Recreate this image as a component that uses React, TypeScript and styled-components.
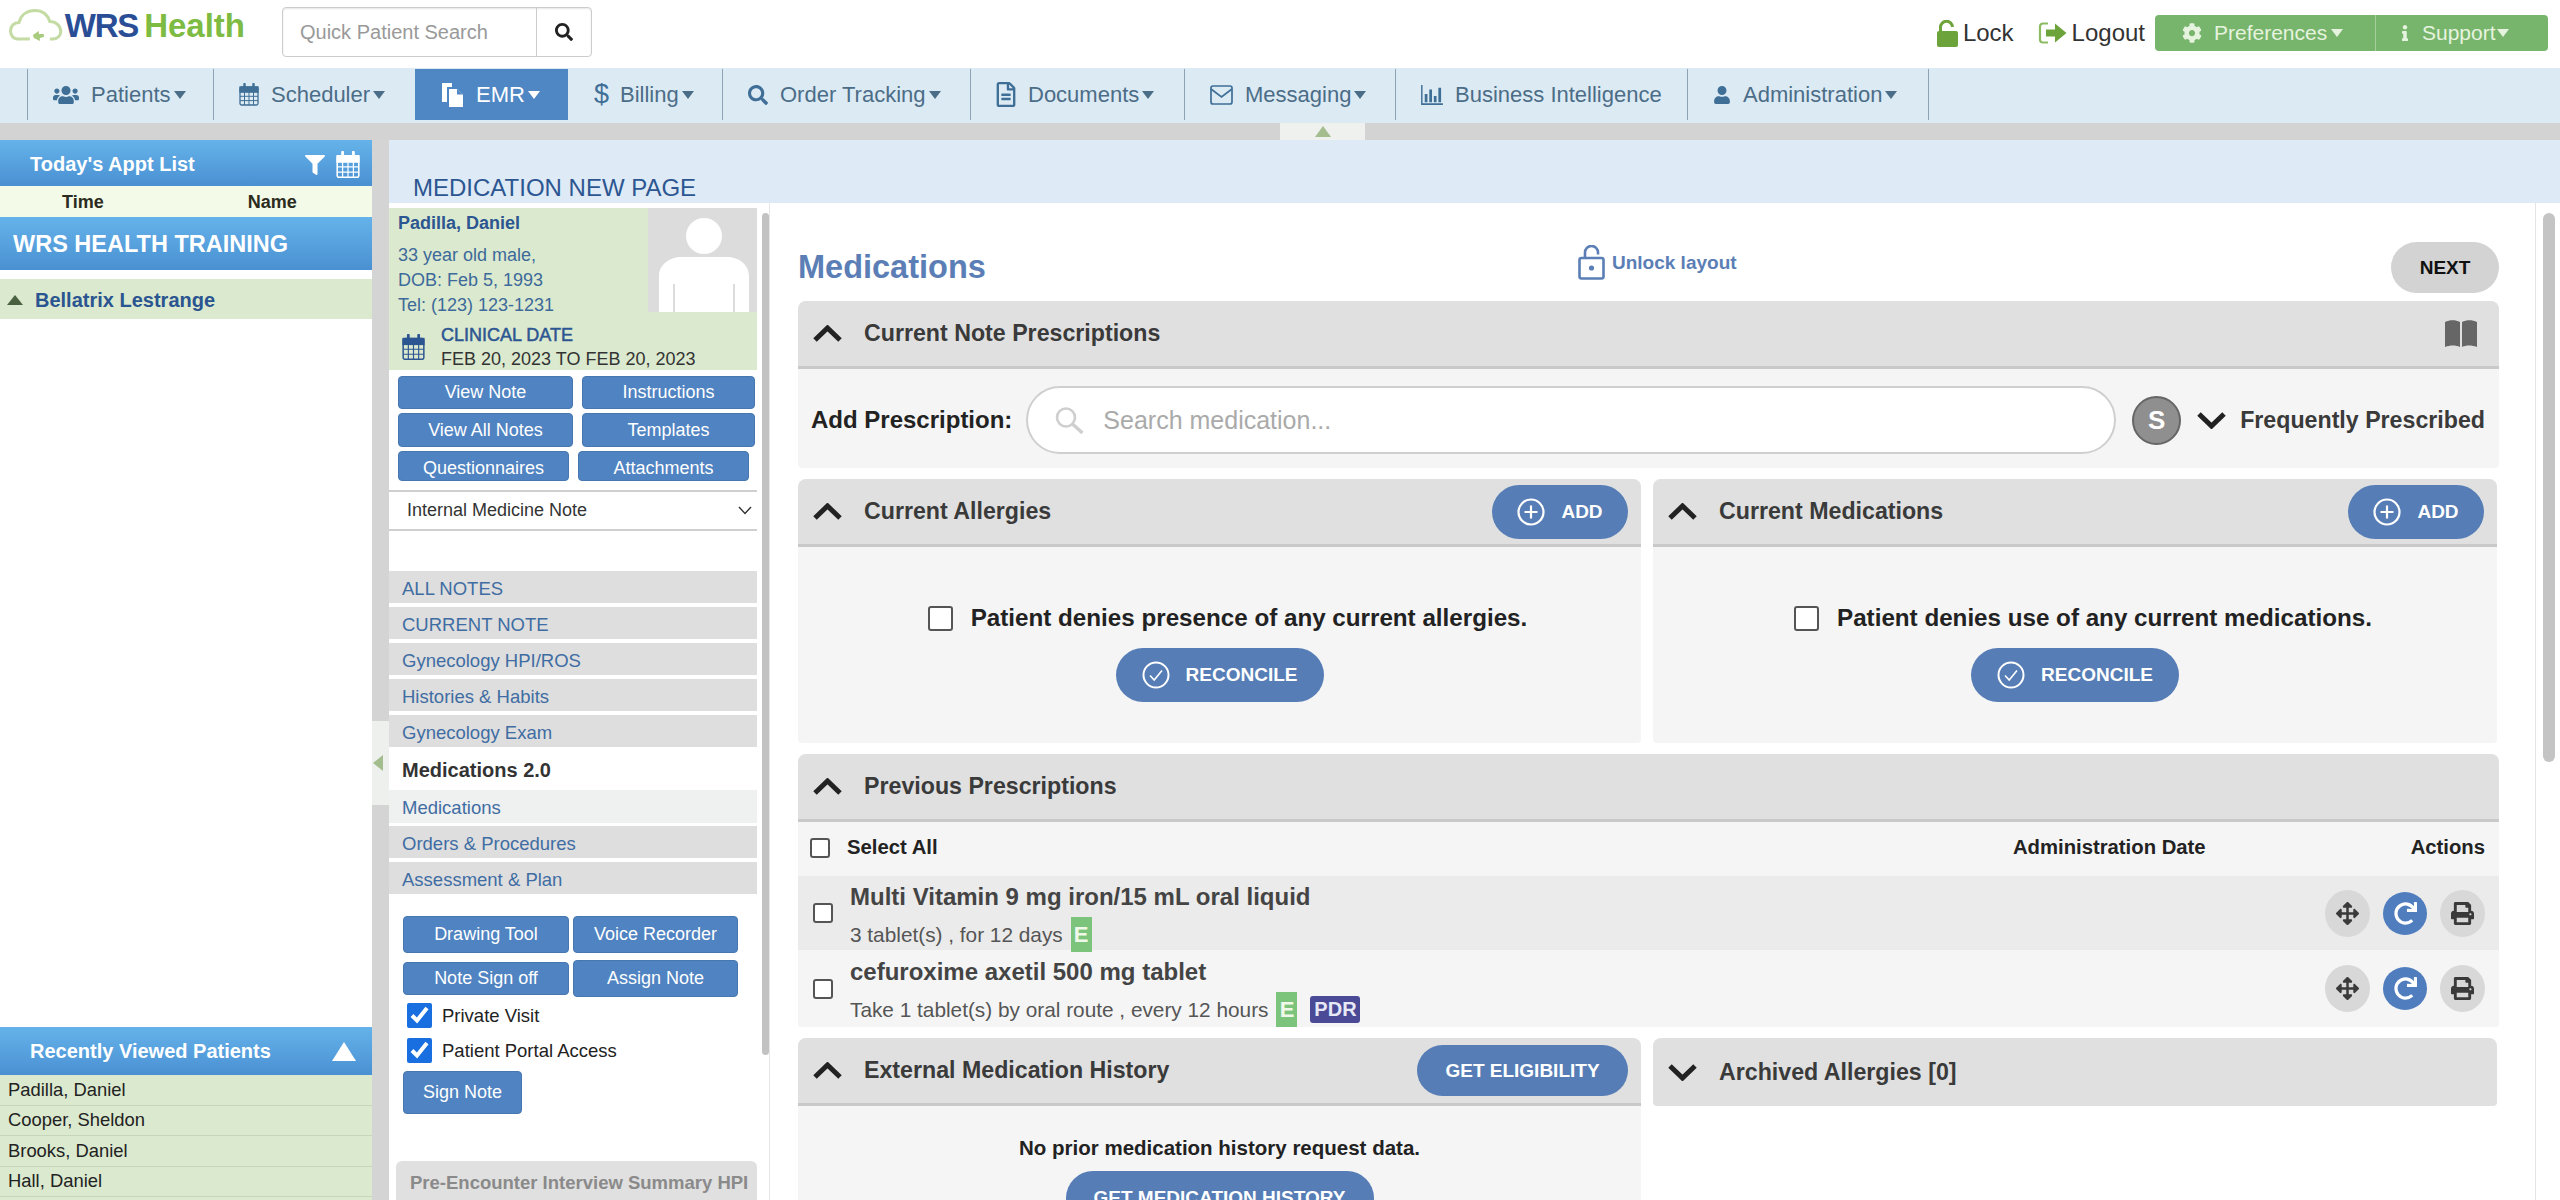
import React from 'react';
import styled, { createGlobalStyle } from 'styled-components';
import {
  FaUsers,
  FaSearch,
  FaRegFileAlt,
  FaUser,
  FaCog,
  FaInfo,
  FaArrowsAlt,
  FaRedo,
  FaPrint,
  FaFilter,
} from 'react-icons/fa';

const GlobalStyle = createGlobalStyle`
  * { box-sizing: border-box; }
  html, body { margin: 0; padding: 0; background: #fff; }
  body { font-family: "Liberation Sans", Arial, sans-serif; color: #333; }
`;

const Page = styled.div`
  width: 2560px;
  height: 1200px;
  display: flex;
  flex-direction: column;
  overflow: hidden;
  background: #fff;
`;

/* top header */
const Header = styled.header`
  height: 68px;
  flex: none;
  display: flex;
  align-items: flex-start;
  padding: 7px 12px 0 9px;
`;

const Logo = styled.div`
  width: 236px;
  height: 37px;
  flex: none;
  display: flex;
  align-items: center;
  gap: 2px;
  font-size: 33px;
  font-weight: 700;
  color: #2a4e96;
  white-space: nowrap;

  b {
    letter-spacing: -1.2px;
  }

  span {
    margin-left: 6px;
    color: #7dbb42;
  }
`;

const QuickSearch = styled.div`
  margin-left: 37px;
  width: 310px;
  height: 50px;
  display: flex;
  border: 1px solid #ccc;
  border-radius: 4px;
  box-shadow: inset 0 1px 2px rgba(0, 0, 0, 0.1);
`;

const QuickInput = styled.div`
  flex: 1;
  display: flex;
  align-items: center;
  padding-left: 17px;
  font-size: 20px;
  color: #999;
  border-right: 1px solid #ccc;
`;

const QuickButton = styled.div`
  width: 54px;
  display: flex;
  align-items: center;
  justify-content: center;
  color: #222;
  font-size: 20px;
`;

const HeaderRight = styled.div`
  margin-left: auto;
  display: flex;
  align-items: center;
  height: 44px;
  padding-top: 8px;
`;

const HeaderLink = styled.div<{ $gap: number }>`
  display: flex;
  align-items: center;
  gap: 5px;
  margin-right: ${(p) => p.$gap}px;
  font-size: 24px;
  color: #333;
`;

const GreenBar = styled.div`
  height: 36px;
  width: 393px;
  display: flex;
  background: #78b56c;
  border-radius: 4px;
  color: #e6f3df;
  font-size: 21px;
`;

const GreenItem = styled.div<{ $w: number; $pad: number }>`
  width: ${(p) => p.$w}px;
  padding-left: ${(p) => p.$pad}px;
  display: flex;
  align-items: center;
  gap: 12px;

  & + & {
    gap: 9px;
    border-left: 1px solid #a4cf9a;
  }
`;

const Caret = styled.i<{ $color?: string }>`
  display: inline-block;
  flex: none;
  margin-left: -8px;
  width: 0;
  height: 0;
  border-left: 6px solid transparent;
  border-right: 6px solid transparent;
  border-top: 8px solid ${(p) => p.$color || 'currentColor'};
`;

/* main nav */
const NavBar = styled.nav`
  height: 55px;
  flex: none;
  display: flex;
  padding: 1px 0 3px 27px;
  background: #dceaf4;
`;

const NavItem = styled.div<{ $w: number; $active?: boolean; $sep?: boolean }>`
  width: ${(p) => p.$w}px;
  flex: none;
  display: flex;
  align-items: center;
  gap: 12px;
  padding-left: ${(p) => (p.$sep ? 25 : 26)}px;
  font-size: 22px;
  color: ${(p) => (p.$active ? '#fff' : '#4b6d87')};
  background: ${(p) => (p.$active ? '#4f86c4' : 'transparent')};
  border-left: ${(p) => (p.$sep ? '1px solid #8da3b3' : 'none')};

  svg {
    flex: none;
    color: ${(p) => (p.$active ? '#fff' : '#3f6f96')};
  }

  ${Caret} {
    margin-left: -9px;
  }
`;

const DocIcon = styled(FaRegFileAlt)`
  width: 20px;
  height: 25px;
`;

const Dollar = styled.span`
  font-size: 27px;
  color: #3f6f96;
  margin-right: -1px;
`;

const Strip = styled.div`
  height: 17px;
  flex: none;
  display: flex;
  padding-left: 1280px;
  background: #d3d3d3;
`;

const StripTab = styled.div`
  width: 85px;
  display: flex;
  align-items: center;
  justify-content: center;
  background: #eef1ee;
`;

const UpTriangle = styled.i`
  width: 0;
  height: 0;
  border-left: 8px solid transparent;
  border-right: 8px solid transparent;
  border-bottom: 11px solid #a3bd8e;
`;

const Body = styled.div`
  flex: 1;
  min-height: 0;
  display: flex;
`;

/* left appointments column */
const LeftPanel = styled.aside`
  width: 372px;
  flex: none;
  display: flex;
  flex-direction: column;
  background: #fff;
`;

const BlueHead = styled.div<{ $h: number; $top?: number }>`
  height: ${(p) => p.$h}px;
  flex: none;
  display: flex;
  align-items: center;
  justify-content: space-between;
  padding: ${(p) => p.$top || 0}px 12px 0 30px;
  color: #fff;
  font-size: 20px;
  font-weight: 700;
  background: linear-gradient(#65b3ea, #4a90d2);
`;

const HeadIcons = styled.div`
  display: flex;
  align-items: center;
  gap: 11px;
`;

const ApptColumns = styled.div`
  height: 31px;
  flex: none;
  display: flex;
  padding: 2px 0 0 62px;
  align-items: center;
  background: #f3fae8;
  font-size: 18px;
  font-weight: 700;
  color: #2b2b20;

  span + span {
    margin-left: 144px;
  }
`;

const ClinicBar = styled.div`
  height: 53px;
  flex: none;
  display: flex;
  align-items: center;
  padding: 2px 0 0 13px;
  color: #fff;
  font-size: 23.5px;
  font-weight: 700;
  background: linear-gradient(#65b3ea, #4a90d2);
`;

const ApptRow = styled.div`
  margin-top: 9px;
  height: 40px;
  flex: none;
  display: flex;
  align-items: center;
  gap: 12px;
  padding: 2px 0 0 7px;
  background: #dbe9cf;
  color: #2a5590;
  font-size: 20px;
  font-weight: 700;

  i {
    width: 0;
    height: 0;
    border-left: 8px solid transparent;
    border-right: 8px solid transparent;
    border-bottom: 10px solid #4a6140;
  }
`;

const LeftSpacer = styled.div`
  flex: 1;
`;

const RecentRow = styled.div`
  height: 30.5px;
  flex: none;
  display: flex;
  align-items: center;
  padding-left: 8px;
  background: #dbe9cf;
  border-bottom: 1px solid #c6d6ba;
  font-size: 18.4px;
  color: #222;
`;

const RecentTail = styled.div`
  height: 3px;
  flex: none;
  background: #dbe9cf;
`;

const Triangle = styled.i`
  width: 0;
  height: 0;
  margin-right: 4px;
  border-left: 12px solid transparent;
  border-right: 12px solid transparent;
  border-bottom: 19px solid #fff;
`;

const Gutter = styled.div`
  width: 17px;
  flex: none;
  padding-top: 581px;
  background: #d4d4d4;
`;

const GutterHandle = styled.div`
  height: 84px;
  display: flex;
  align-items: center;
  padding-left: 1px;
  background: #eef0ee;

  i {
    width: 0;
    height: 0;
    border-top: 8px solid transparent;
    border-bottom: 8px solid transparent;
    border-right: 10px solid #a3bd8e;
  }
`;

/* main area */
const Main = styled.main`
  flex: 1;
  min-width: 0;
  display: flex;
  flex-direction: column;
`;

const TitleBand = styled.div`
  height: 63px;
  flex: none;
  display: flex;
  align-items: flex-end;
  padding: 0 0 1px 24px;
  background: #deeaf5;
  color: #2c5691;
  font-size: 24px;
`;

const Workspace = styled.div`
  flex: 1;
  min-height: 0;
  display: flex;
`;

/* patient column */
const PatientColumn = styled.div`
  width: 368px;
  flex: none;
  padding-top: 5px;
  display: flex;
  flex-direction: column;
`;

const PatientCard = styled.div`
  height: 162px;
  flex: none;
  background: #dbe9cf;
`;

const PatientTop = styled.div`
  height: 104px;
  display: flex;
  justify-content: space-between;
`;

const PatientInfo = styled.div`
  padding: 5px 0 0 9px;
  font-size: 18px;
  line-height: 25px;
  color: #3d6a9a;
`;

const PatientName = styled.div`
  font-weight: 700;
  color: #2c5691;
  margin-bottom: 10px;
  line-height: 20px;
`;

const Photo = styled.div`
  width: 109px;
  height: 104px;
  background: #dcdcdc;
`;

const ClinicalRow = styled.div`
  display: flex;
  align-items: center;
  gap: 16px;
  padding: 11px 0 0 13px;
`;

const ClinicalText = styled.div`
  font-size: 18px;
  line-height: 24px;
  color: #333;

  b {
    display: block;
    font-weight: 500;
    color: #2c5691;
    -webkit-text-stroke: 0.5px #2c5691;
  }
`;

const ButtonRows = styled.div`
  padding: 6px 0 0 9px;
  display: flex;
  flex-direction: column;
  gap: 4px;
`;

const ButtonRow = styled.div`
  display: flex;
  gap: 9px;
`;

const SideButton = styled.div<{ $w: number; $h: number; $low?: boolean; $mt?: number }>`
  width: ${(p) => p.$w}px;
  height: ${(p) => p.$h}px;
  flex: none;
  margin-top: ${(p) => p.$mt || 0}px;
  display: flex;
  justify-content: center;
  align-items: ${(p) => (p.$low ? 'flex-end' : 'center')};
  padding-bottom: ${(p) => (p.$low ? 1 : 0)}px;
  background: #4f83c1;
  border: 1px solid #4777b0;
  border-radius: 4px;
  color: #fff;
  font-size: 18px;
`;

const NoteSelect = styled.div`
  margin-top: 9px;
  height: 41px;
  flex: none;
  display: flex;
  align-items: center;
  justify-content: space-between;
  padding: 0 5px 0 18px;
  border-top: 2px solid #cfcfcf;
  border-bottom: 2px solid #cfcfcf;
  font-size: 18px;
  color: #333;
`;

const NoteList = styled.div`
  margin-top: 40px;
  display: flex;
  flex-direction: column;
`;

const NoteRow = styled.div<{ $kind?: 'active' | 'light'; $tight?: boolean }>`
  flex: none;
  display: flex;
  align-items: center;
  padding: 3px 0 0 13px;
  height: ${(p) => (p.$kind === 'active' ? 43 : p.$kind === 'light' ? 33 : 32)}px;
  margin-bottom: ${(p) => (p.$tight ? 0 : p.$kind === 'active' ? 0 : p.$kind === 'light' ? 3 : 4)}px;
  background: ${(p) => (p.$kind === 'active' ? '#fff' : p.$kind === 'light' ? '#eff0f0' : '#dedede')};
  color: ${(p) => (p.$kind === 'active' ? '#333' : '#3f6da3')};
  font-size: ${(p) => (p.$kind === 'active' ? 20 : 18.5)}px;
  font-weight: ${(p) => (p.$kind === 'active' ? 700 : 400)};
`;

const ToolBox = styled.div`
  padding: 22px 0 0 14px;
  display: flex;
  flex-direction: column;
`;

const ToolRow = styled.div<{ $mt: number }>`
  display: flex;
  align-items: center;
  gap: 4px;
  margin-top: ${(p) => p.$mt}px;
`;

const CheckLine = styled.label<{ $mt: number }>`
  display: flex;
  align-items: center;
  gap: 10px;
  margin: ${(p) => p.$mt}px 0 0 4px;
  height: 25px;
  font-size: 18.5px;
  color: #222;

  input {
    width: 25px;
    height: 25px;
    margin: 0;
    accent-color: #1a6fe0;
  }
`;

const SummaryBox = styled.div`
  margin: 47px 0 0 7px;
  height: 60px;
  padding: 11px 0 0 14px;
  background: #e0e0e0;
  border-radius: 6px 6px 0 0;
  color: #8a8a8a;
  font-size: 18.5px;
  font-weight: 700;
  white-space: nowrap;
  overflow: hidden;
`;

const InnerScroll = styled.div`
  width: 13px;
  flex: none;
  padding: 10px 0 0 5px;
  border-right: 1px solid #e6e6e6;
`;

const InnerThumb = styled.div`
  height: 842px;
  background: #c2c2c2;
  border-radius: 5px;
`;

/* content */
const Content = styled.div`
  flex: 1;
  min-width: 0;
  padding: 39px 36px 0 28px;
  display: flex;
  flex-direction: column;
  gap: 11px;
`;

const OuterScroll = styled.div`
  width: 25px;
  flex: none;
  padding: 10px 5px 0 7px;
  border-left: 1px solid #e4e4e4;
`;

const OuterThumb = styled.div`
  height: 549px;
  background: #c4c4c4;
  border-radius: 6px;
`;

const TopRow = styled.div`
  height: 51px;
  flex: none;
  margin-bottom: -3px;
  display: flex;
  align-items: center;
`;

const PageHeading = styled.h1`
  margin: 0;
  width: 780px;
  font-size: 32.5px;
  font-weight: 700;
  color: #5a7eb5;
`;

const UnlockLayout = styled.div`
  display: flex;
  align-items: center;
  gap: 7px;
  margin-top: -10px;
  color: #5a7eb5;
  font-size: 19px;
  font-weight: 700;
`;

const NextButton = styled.div`
  margin-left: auto;
  width: 108px;
  height: 51px;
  display: flex;
  align-items: center;
  justify-content: center;
  background: #d3d3d3;
  border-radius: 26px;
  color: #111;
  font-size: 19px;
  font-weight: 700;
`;

const Panel = styled.section<{ $h?: number }>`
  flex: none;
  height: ${(p) => (p.$h ? `${p.$h}px` : 'auto')};
  background: #f5f5f5;
  border-radius: 8px 8px 4px 4px;
  overflow: hidden;
`;

const PanelGrid = styled.div`
  display: grid;
  grid-template-columns: 843px 844px;
  gap: 12px;
  flex: none;
`;

const PanelHead = styled.div<{ $closed?: boolean }>`
  height: 68px;
  display: flex;
  align-items: center;
  gap: 22px;
  padding: 0 13px 0 15px;
  background: #e0e0e0;
  border-bottom: ${(p) => (p.$closed ? 'none' : '3px solid #c9c9c9')};
  color: #3a3a3a;
  font-size: 23.2px;
  font-weight: 700;
`;

const HeadTitle = styled.div`
  flex: 1;
`;

const Pill = styled.div<{ $w: number; $h: number; $mt?: number }>`
  width: ${(p) => p.$w}px;
  height: ${(p) => p.$h}px;
  flex: none;
  margin-top: ${(p) => p.$mt || 0}px;
  display: flex;
  align-items: center;
  justify-content: center;
  gap: 16px;
  background: #567db5;
  border-radius: 27px;
  color: #fff;
  font-size: 19px;
  font-weight: 700;
`;

const AddRow = styled.div`
  height: 99px;
  display: flex;
  align-items: center;
  padding: 3px 14px 0 13px;
`;

const AddLabel = styled.div`
  font-size: 24px;
  font-weight: 700;
  color: #222;
`;

const MedSearch = styled.div`
  flex: 1;
  height: 68px;
  margin-left: 14px;
  display: flex;
  align-items: center;
  gap: 19px;
  padding-left: 27px;
  background: #fff;
  border: 2px solid #cfcfcf;
  border-radius: 34px;
  color: #aaa;
  font-size: 25px;
`;

const SpecialtyBadge = styled.div`
  width: 49px;
  height: 49px;
  flex: none;
  margin: 0 16px;
  display: flex;
  align-items: center;
  justify-content: center;
  background: #8f8f8f;
  border: 2px solid #666;
  border-radius: 50%;
  color: #fff;
  font-size: 26px;
  font-weight: 700;
`;

const FrequentLabel = styled.div`
  margin-left: 14px;
  color: #3a3a3a;
  font-size: 23.2px;
  font-weight: 700;
`;

const DenyBody = styled.div`
  height: 196px;
  display: flex;
  flex-direction: column;
  align-items: center;
  padding-top: 56px;
`;

const DenyLine = styled.label`
  margin-left: 16px;
  height: 30px;
  display: flex;
  align-items: center;
  gap: 18px;
  color: #222;
  font-size: 24.2px;
  font-weight: 700;
`;

const Box = styled.input.attrs({ type: 'checkbox' })<{ $size: number }>`
  appearance: none;
  flex: none;
  margin: 0;
  width: ${(p) => p.$size}px;
  height: ${(p) => p.$size}px;
  background: #fff;
  border: 2px solid #555;
  border-radius: 3px;
`;

const SelectRow = styled.div`
  height: 54px;
  display: flex;
  align-items: center;
  gap: 17px;
  padding: 0 14px 3px 12px;
  color: #222;
  font-size: 20.3px;
  font-weight: 700;
`;

const AdminDate = styled.div`
  margin-left: auto;
  margin-right: 188px;
`;

const RxRow = styled.div<{ $striped?: boolean }>`
  height: ${(p) => (p.$striped ? 74 : 77)}px;
  display: flex;
  align-items: center;
  padding: 0 14px 0 15px;
  background: ${(p) => (p.$striped ? '#ebebeb' : '#f5f5f5')};
`;

const RxText = styled.div<{ $top: number }>`
  align-self: flex-start;
  margin-left: 17px;
  padding-top: ${(p) => p.$top}px;
`;

const RxTitle = styled.div`
  height: 28px;
  line-height: 28px;
  color: #444;
  font-size: 24px;
  font-weight: 700;
`;

const RxSub = styled.div`
  height: 35px;
  margin-top: 6px;
  display: flex;
  align-items: center;
  color: #555;
  font-size: 20.8px;
`;

const EBadge = styled.span`
  width: 21px;
  height: 35px;
  margin-left: 8px;
  display: flex;
  align-items: center;
  justify-content: center;
  background: #7cc47c;
  color: #f0f8ea;
  font-size: 22px;
  font-weight: 700;
`;

const PdrBadge = styled.span`
  width: 50px;
  height: 27px;
  margin-left: 13px;
  display: flex;
  align-items: center;
  justify-content: center;
  background: #4a4a96;
  border-radius: 3px;
  color: #e8e8f6;
  font-size: 20px;
  font-weight: 700;
`;

const RxActions = styled.div`
  margin-left: auto;
  display: flex;
  align-items: center;
  gap: 13px;
`;

const RoundAction = styled.div<{ $blue?: boolean }>`
  width: ${(p) => (p.$blue ? 44 : 45)}px;
  height: ${(p) => (p.$blue ? 43 : 47)}px;
  display: flex;
  align-items: center;
  justify-content: center;
  border-radius: 50%;
  background: ${(p) => (p.$blue ? '#4f7dbd' : '#d8d8d8')};
  color: ${(p) => (p.$blue ? '#fff' : '#3a3a3a')};
  font-size: 23px;
`;

const HistoryBody = styled.div`
  height: 180px;
  display: flex;
  flex-direction: column;
  align-items: center;
  padding-top: 30px;
  color: #222;
  font-size: 20.5px;
  font-weight: 700;
  line-height: 24px;
`;

/* drawn icons */
const Cal = ({ size, color }: { size: number; color: string }) => (
  <svg width={size} height={size * 1.15} viewBox="0 0 20 23" fill="none" stroke={color} strokeWidth="1.3">
    <rect x="1" y="4" width="18" height="18" rx="1.5" />
    <path d="M1 9h18M1 13.3h18M1 17.6h18M5.5 9v13M10 9v13M14.5 9v13" strokeWidth="1" />
    <path d="M5.5 1v5M14.5 1v5" strokeWidth="2.4" strokeLinecap="round" />
    <rect x="1" y="4" width="18" height="5" fill={color} />
  </svg>
);

const Chevron = ({ down }: { down?: boolean }) => (
  <svg width="29" height="17" viewBox="0 0 29 17" fill="none" stroke="#222" strokeWidth="5">
    <path d={down ? 'M2 2l12.5 12L27 2' : 'M2 15L14.5 3 27 15'} />
  </svg>
);

const PlusCircle = () => (
  <svg width="28" height="28" viewBox="0 0 28 28" fill="none" stroke="#fff" strokeWidth="2.2">
    <circle cx="14" cy="14" r="12.5" />
    <path d="M14 7.5v13M7.5 14h13" />
  </svg>
);

const CheckCircle = () => (
  <svg width="28" height="28" viewBox="0 0 28 28" fill="none" stroke="#fff" strokeWidth="2">
    <circle cx="14" cy="14" r="12.5" />
    <path d="M8 14.5l4.2 4.5L20 9.5" strokeWidth="1.6" />
  </svg>
);

const CloudLogo = () => (
  <svg width="54" height="34" viewBox="0 0 54 34" fill="none" stroke="#c4dba4" strokeWidth="3">
    <path d="M14 30H9C4 30 1.5 26 1.5 22 1.5 17 5 13.5 10 13.5 12 6 18 1.5 26 1.5c8 0 13 5 15 11 6 0 11 4 11 10 0 4-3 7.5-8 7.5h-3" />
    <path d="M14 30h7" />
    <path d="M24 26l6-4v3h5v3l-4 1v3l-6-3z" fill="#a9cb7d" stroke="none" />
  </svg>
);

const EmrIcon = () => (
  <svg width="23" height="24" viewBox="0 0 23 24" fill="#fff">
    <path d="M1 0h10v4H6v15H1z" />
    <path d="M8 6h8l6 5.5V24H8z" />
    <path d="M16 6v5.5h6" fill="#4f86c4" />
  </svg>
);

const EnvelopeIcon = () => (
  <svg width="23" height="20" viewBox="0 0 23 20" fill="none" stroke="#3f6f96" strokeWidth="1.7">
    <rect x="1" y="1" width="21" height="18" rx="2" />
    <path d="M1 4l10.5 8L22 4" />
  </svg>
);

const BarsIcon = () => (
  <svg width="22" height="20" viewBox="0 0 24 22" fill="#3f6f96">
    <path d="M0 0h1.6v20H24v2H0z" />
    <path d="M4 10h3v9H4zM9 5h3v14H9zM14 12h3v7h-3zM19 3h3v16h-3z" />
  </svg>
);

const OpenLock = () => (
  <svg width="21" height="27" viewBox="0 0 21 27">
    <path d="M3.5 14V7.5a6 6 0 0 1 12-.5" fill="none" stroke="#6ca33a" strokeWidth="3" />
    <rect x="0" y="11" width="21" height="16" rx="2" fill="#6ca33a" />
  </svg>
);

const LogoutIcon = () => (
  <svg width="29" height="22" viewBox="0 0 29 22">
    <path d="M10 1.5H5a3 3 0 0 0-3 3v13a3 3 0 0 0 3 3h5" fill="none" stroke="#8cbb62" strokeWidth="2.2" />
    <path d="M8 7.5h9V1.5L28.5 11 17 20.5v-6H8z" fill="#6ca33a" />
  </svg>
);

const Silhouette = () => (
  <svg width="109" height="104" viewBox="0 0 109 104" fill="#fff">
    <ellipse cx="56" cy="28" rx="18" ry="18" />
    <path d="M11 104V68c0-12 12-19 22-19h46c11 0 22 7 22 19v36H87V76h-2v28H27V76h-2v28z" />
  </svg>
);

const Magnifier = () => (
  <svg width="29" height="27" viewBox="0 0 29 27" fill="none" stroke="#cfcfcf" strokeWidth="2.6">
    <circle cx="11" cy="10.5" r="9" />
    <path d="M17.5 17l10 9" strokeWidth="3.4" />
  </svg>
);

const UnlockIcon = () => (
  <svg width="27" height="35" viewBox="0 0 27 35" fill="none" stroke="#5a7eb5" strokeWidth="2.6">
    <path d="M7 13V7.5a6.5 6.5 0 0 1 13 0v2" />
    <rect x="1.5" y="13" width="24" height="20.5" rx="2" />
    <circle cx="13.5" cy="23" r="2.6" fill="#5a7eb5" stroke="none" />
  </svg>
);

const BookSvg = styled.svg`
  margin-right: 8px;
`;

const BookIcon = () => (
  <BookSvg width="34" height="27" viewBox="0 0 34 27" fill="#666">
    <path d="M1 2c5-2.5 11-2 15 0v25c-4-2-10-2-15 0z" />
    <path d="M18 2c4-2 10-2.5 15 0v25c-5-2-11-2-15 0z" />
  </BookSvg>
);

const SmallChevron = () => (
  <svg width="14" height="9" viewBox="0 0 14 9" fill="none" stroke="#333" strokeWidth="1.4">
    <path d="M1 1l6 6.5L13 1" />
  </svg>
);

const navItems = [
  { label: 'Patients', w: 186, sep: true, icon: <FaUsers size={26} />, caret: true },
  { label: 'Scheduler', w: 202, sep: true, icon: <Cal size={20} color="#3f6f96" />, caret: true },
  { label: 'EMR', w: 153, sep: false, active: true, icon: <EmrIcon />, caret: true },
  { label: 'Billing', w: 154, sep: false, icon: <Dollar>$</Dollar>, caret: true },
  { label: 'Order Tracking', w: 248, sep: true, icon: <FaSearch size={20} />, caret: true },
  { label: 'Documents', w: 214, sep: true, icon: <DocIcon />, caret: true },
  { label: 'Messaging', w: 211, sep: true, icon: <EnvelopeIcon />, caret: true },
  { label: 'Business Intelligence', w: 292, sep: true, icon: <BarsIcon />, caret: false },
  { label: 'Administration', w: 241, sep: true, icon: <FaUser size={18} />, caret: true },
];

const noteRows = ['ALL NOTES', 'CURRENT NOTE', 'Gynecology HPI/ROS', 'Histories & Habits'];

const recents = ['Padilla, Daniel', 'Cooper, Sheldon', 'Brooks, Daniel', 'Hall, Daniel'];

const prescriptions = [
  { name: 'Multi Vitamin 9 mg iron/15 mL oral liquid', sig: '3 tablet(s) , for 12 days', striped: true },
  { name: 'cefuroxime axetil 500 mg tablet', sig: 'Take 1 tablet(s) by oral route , every 12 hours', pdr: true },
];

const App = () => {
  return (
    <Page>
      <GlobalStyle />
      <Header>
        <Logo>
          <CloudLogo />
          <div>
            <b>WRS</b>
            <span>Health</span>
          </div>
        </Logo>
        <QuickSearch>
          <QuickInput>Quick Patient Search</QuickInput>
          <QuickButton>
            <FaSearch size={18} />
          </QuickButton>
        </QuickSearch>
        <HeaderRight>
          <HeaderLink $gap={24}>
            <OpenLock />
            Lock
          </HeaderLink>
          <HeaderLink $gap={10}>
            <LogoutIcon />
            Logout
          </HeaderLink>
          <GreenBar>
            <GreenItem $w={220} $pad={27}>
              <FaCog size={20} />
              Preferences
              <Caret />
            </GreenItem>
            <GreenItem $w={173} $pad={21}>
              <FaInfo size={16} />
              Support
              <Caret />
            </GreenItem>
          </GreenBar>
        </HeaderRight>
      </Header>

      <NavBar>
        {navItems.map((item) => (
          <NavItem key={item.label} $w={item.w} $sep={item.sep} $active={item.active}>
            {item.icon}
            {item.label}
            {item.caret && <Caret />}
          </NavItem>
        ))}
        <NavItem $w={1} $sep />
      </NavBar>

      <Strip>
        <StripTab>
          <UpTriangle />
        </StripTab>
      </Strip>

      <Body>
        <LeftPanel>
          <BlueHead $h={46} $top={3}>
            Today&apos;s Appt List
            <HeadIcons>
              <FaFilter size={20} />
              <Cal size={24} color="#fff" />
            </HeadIcons>
          </BlueHead>
          <ApptColumns>
            <span>Time</span>
            <span>Name</span>
          </ApptColumns>
          <ClinicBar>WRS HEALTH TRAINING</ClinicBar>
          <ApptRow>
            <i />
            Bellatrix Lestrange
          </ApptRow>
          <LeftSpacer />
          <BlueHead $h={48}>
            Recently Viewed Patients
            <Triangle />
          </BlueHead>
          {recents.map((name) => (
            <RecentRow key={name}>{name}</RecentRow>
          ))}
          <RecentTail />
        </LeftPanel>

        <Gutter>
          <GutterHandle>
            <i />
          </GutterHandle>
        </Gutter>

        <Main>
          <TitleBand>MEDICATION NEW PAGE</TitleBand>
          <Workspace>
            <PatientColumn>
              <PatientCard>
                <PatientTop>
                  <PatientInfo>
                    <PatientName>Padilla, Daniel</PatientName>
                    <div>33 year old male,</div>
                    <div>DOB: Feb 5, 1993</div>
                    <div>Tel: (123) 123-1231</div>
                  </PatientInfo>
                  <Photo>
                    <Silhouette />
                  </Photo>
                </PatientTop>
                <ClinicalRow>
                  <Cal size={23} color="#2c5691" />
                  <ClinicalText>
                    <b>CLINICAL DATE</b>
                    FEB 20, 2023 TO FEB 20, 2023
                  </ClinicalText>
                </ClinicalRow>
              </PatientCard>

              <ButtonRows>
                <ButtonRow>
                  <SideButton $w={175} $h={33}>View Note</SideButton>
                  <SideButton $w={173} $h={33}>Instructions</SideButton>
                </ButtonRow>
                <ButtonRow>
                  <SideButton $w={175} $h={34}>View All Notes</SideButton>
                  <SideButton $w={173} $h={34}>Templates</SideButton>
                </ButtonRow>
                <ButtonRow>
                  <SideButton $w={171} $h={30} $low>Questionnaires</SideButton>
                  <SideButton $w={171} $h={30} $low>Attachments</SideButton>
                </ButtonRow>
              </ButtonRows>

              <NoteSelect>
                Internal Medicine Note
                <SmallChevron />
              </NoteSelect>

              <NoteList>
                {noteRows.map((label) => (
                  <NoteRow key={label}>{label}</NoteRow>
                ))}
                <NoteRow $tight>Gynecology Exam</NoteRow>
                <NoteRow $kind="active">Medications 2.0</NoteRow>
                <NoteRow $kind="light">Medications</NoteRow>
                <NoteRow>Orders &amp; Procedures</NoteRow>
                <NoteRow $tight>Assessment &amp; Plan</NoteRow>
              </NoteList>

              <ToolBox>
                <ToolRow $mt={0}>
                  <SideButton $w={166} $h={37}>Drawing Tool</SideButton>
                  <SideButton $w={165} $h={37}>Voice Recorder</SideButton>
                </ToolRow>
                <ToolRow $mt={7}>
                  <SideButton $w={166} $h={33}>Note Sign off</SideButton>
                  <SideButton $w={165} $h={37}>Assign Note</SideButton>
                </ToolRow>
                <CheckLine $mt={6}>
                  <input type="checkbox" defaultChecked />
                  Private Visit
                </CheckLine>
                <CheckLine $mt={10}>
                  <input type="checkbox" defaultChecked />
                  Patient Portal Access
                </CheckLine>
                <SideButton $w={119} $h={43} $mt={8}>Sign Note</SideButton>
              </ToolBox>

              <SummaryBox>Pre-Encounter Interview Summary HPI</SummaryBox>
            </PatientColumn>

            <InnerScroll>
              <InnerThumb />
            </InnerScroll>

            <Content>
              <TopRow>
                <PageHeading>Medications</PageHeading>
                <UnlockLayout>
                  <UnlockIcon />
                  Unlock layout
                </UnlockLayout>
                <NextButton>NEXT</NextButton>
              </TopRow>

              <Panel>
                <PanelHead>
                  <Chevron />
                  <HeadTitle>Current Note Prescriptions</HeadTitle>
                  <BookIcon />
                </PanelHead>
                <AddRow>
                  <AddLabel>Add Prescription:</AddLabel>
                  <MedSearch>
                    <Magnifier />
                    Search medication...
                  </MedSearch>
                  <SpecialtyBadge>S</SpecialtyBadge>
                  <Chevron down />
                  <FrequentLabel>Frequently Prescribed</FrequentLabel>
                </AddRow>
              </Panel>

              <PanelGrid>
                <Panel>
                  <PanelHead>
                    <Chevron />
                    <HeadTitle>Current Allergies</HeadTitle>
                    <Pill $w={136} $h={54}>
                      <PlusCircle />
                      ADD
                    </Pill>
                  </PanelHead>
                  <DenyBody>
                    <DenyLine>
                      <Box $size={25} />
                      Patient denies presence of any current allergies.
                    </DenyLine>
                    <Pill $w={208} $h={54} $mt={15}>
                      <CheckCircle />
                      RECONCILE
                    </Pill>
                  </DenyBody>
                </Panel>
                <Panel>
                  <PanelHead>
                    <Chevron />
                    <HeadTitle>Current Medications</HeadTitle>
                    <Pill $w={136} $h={54}>
                      <PlusCircle />
                      ADD
                    </Pill>
                  </PanelHead>
                  <DenyBody>
                    <DenyLine>
                      <Box $size={25} />
                      Patient denies use of any current medications.
                    </DenyLine>
                    <Pill $w={208} $h={54} $mt={15}>
                      <CheckCircle />
                      RECONCILE
                    </Pill>
                  </DenyBody>
                </Panel>
              </PanelGrid>

              <Panel>
                <PanelHead>
                  <Chevron />
                  <HeadTitle>Previous Prescriptions</HeadTitle>
                </PanelHead>
                <SelectRow>
                  <Box $size={20} />
                  Select All
                  <AdminDate>Administration Date</AdminDate>
                  <span>Actions</span>
                </SelectRow>
                {prescriptions.map((rx) => (
                  <RxRow key={rx.name} $striped={rx.striped}>
                    <Box $size={20} />
                    <RxText $top={rx.striped ? 7 : 8}>
                      <RxTitle>{rx.name}</RxTitle>
                      <RxSub>
                        {rx.sig}
                        <EBadge>E</EBadge>
                        {rx.pdr && <PdrBadge>PDR</PdrBadge>}
                      </RxSub>
                    </RxText>
                    <RxActions>
                      <RoundAction>
                        <FaArrowsAlt />
                      </RoundAction>
                      <RoundAction $blue>
                        <FaRedo />
                      </RoundAction>
                      <RoundAction>
                        <FaPrint />
                      </RoundAction>
                    </RxActions>
                  </RxRow>
                ))}
              </Panel>

              <PanelGrid>
                <Panel>
                  <PanelHead>
                    <Chevron />
                    <HeadTitle>External Medication History</HeadTitle>
                    <Pill $w={211} $h={51}>GET ELIGIBILITY</Pill>
                  </PanelHead>
                  <HistoryBody>
                    No prior medication history request data.
                    <Pill $w={308} $h={54} $mt={11}>GET MEDICATION HISTORY</Pill>
                  </HistoryBody>
                </Panel>
                <Panel $h={68}>
                  <PanelHead $closed>
                    <Chevron down />
                    <HeadTitle>Archived Allergies [0]</HeadTitle>
                  </PanelHead>
                </Panel>
              </PanelGrid>
            </Content>

            <OuterScroll>
              <OuterThumb />
            </OuterScroll>
          </Workspace>
        </Main>
      </Body>
    </Page>
  );
};

export default App;
